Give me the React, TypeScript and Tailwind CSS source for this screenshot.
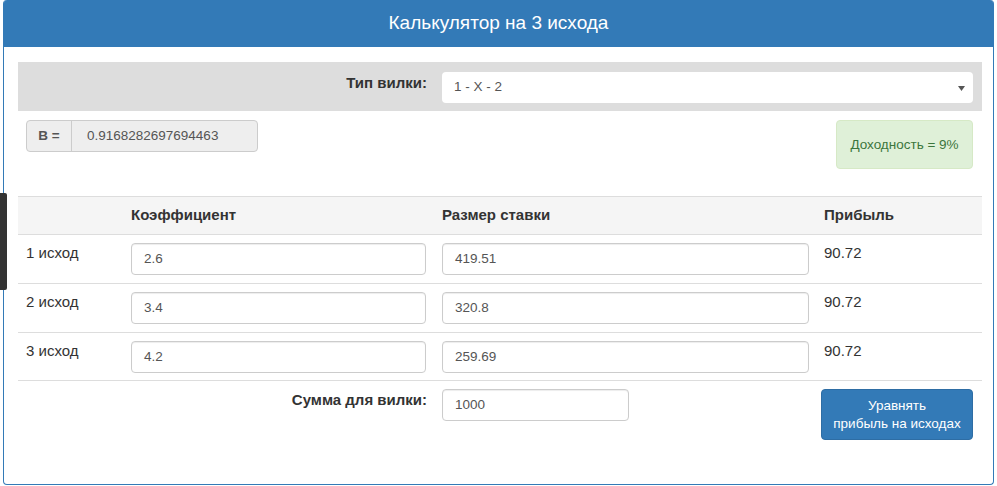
import React from "react";

const font = { fontFamily: '"Liberation Sans", Arial, Helvetica, sans-serif' };

function Field({ value, w }: { value: string; w: string }) {
  return (
    <div
      className={`${w} h-[32px] border border-[#ccc] rounded-[4px] bg-white flex items-center pl-[12px] text-[13.5px] text-[#555] shadow-[inset_0_1px_1px_rgba(0,0,0,0.075)]`}
    >
      {value}
    </div>
  );
}

function Row({ label, k, s, p, last }: { label: string; k: string; s: string; p: string; last?: boolean }) {
  return (
    <div className={`flex h-[49px] border-t border-[#ddd] ${last ? "border-b" : ""}`}>
      <div className="w-[105px] pl-[8px] pt-[8px] leading-[20px] text-[15px] text-[#333]">{label}</div>
      <div className="w-[311px] px-[8px] pt-[8px]">
        <Field value={k} w="w-[295px]" />
      </div>
      <div className="w-[383px] px-[8px] pt-[8px]">
        <Field value={s} w="w-[367px]" />
      </div>
      <div className="flex-1 pl-[7px] pt-[8px] leading-[20px] text-[15px] text-[#333]">{p}</div>
    </div>
  );
}

export default function App() {
  return (
    <div className="relative w-[997px] h-[486px] bg-white" style={font}>
      <div className="absolute left-0 top-[193px] w-[7px] h-[97px] bg-[#333] rounded-r-[2px] z-10" />
      <div className="ml-[3px] w-[991px] h-[485px] border border-t-0 border-[#337ab7] rounded-[4px] flex flex-col">
        <div className="h-[47px] bg-[#337ab7] rounded-t-[3px] flex items-center justify-center text-white text-[19px]">
          Калькулятор на 3 исхода
        </div>
        <div className="pl-[14px] pt-[15px] flex flex-col">
          {/* type row */}
          <div className="w-[964px] h-[49px] bg-[#ddd] flex pt-[10px]">
            <div className="w-[409px] text-right pt-[1px] text-[15px] font-bold text-[#333] leading-[20px]">
              Тип вилки:
            </div>
            <div className="ml-[15px] w-[531px] h-[31px] bg-white rounded-[4px] flex items-center justify-between pl-[12px] pr-[8px] text-[13.5px] text-[#555] shadow-[0_0_0_1px_#ddd]">
              <span>1 - X - 2</span>
              <svg width="7" height="5" viewBox="0 0 7 5" className="mt-[1px]">
                <path d="M0 0 L7 0 L3.5 5 Z" fill="#555" />
              </svg>
            </div>
          </div>
          {/* B + alert */}
          <div className="flex justify-between w-[955px] mt-[9px] pl-[8px]">
            <div className="flex h-[32px] w-[232px] border border-[#ccc] rounded-[4px] bg-[#eee] text-[13.5px]">
              <div className="w-[45px] border-r border-[#ccc] flex items-center justify-center font-bold text-[#555]">
                B =
              </div>
              <div className="flex-1 flex items-center pl-[15px] text-[#555]">0.9168282697694463</div>
            </div>
            <div className="w-[137px] h-[49px] bg-[#dff0d8] border border-[#d6e9c6] rounded-[4px] flex items-center justify-center text-[13.5px] text-[#3c763d] pt-[2px]">
              Доходность = 9%
            </div>
          </div>
          {/* table */}
          <div className="w-[964px] mt-[27px] flex flex-col">
            <div className="flex h-[38px] bg-[#f5f5f5] border-t border-[#ddd] items-center text-[15px] font-bold text-[#333]">
              <div className="w-[105px]" />
              <div className="w-[311px] pl-[8px]">Коэффициент</div>
              <div className="w-[383px] pl-[8px]">Размер ставки</div>
              <div className="flex-1 pl-[7px]">Прибыль</div>
            </div>
            <Row label="1 исход" k="2.6" s="419.51" p="90.72" />
            <Row label="2 исход" k="3.4" s="320.8" p="90.72" />
            <Row label="3 исход" k="4.2" s="259.69" p="90.72" last />
          </div>
          {/* sum row */}
          <div className="flex w-[964px] mt-[8px]">
            <div className="w-[409px] text-right pt-[1px] text-[15px] font-bold text-[#333] leading-[20px]">
              Сумма для вилки:
            </div>
            <div className="ml-[15px]">
              <Field value="1000" w="w-[187px]" />
            </div>
            <div className="ml-[192px] w-[152px] h-[51px] bg-[#337ab7] border border-[#2e6da4] rounded-[4px] flex flex-col items-center justify-center text-white text-[13.5px] leading-[18px]">
              <span>Уравнять</span>
              <span>прибыль на исходах</span>
            </div>
          </div>
        </div>
      </div>
    </div>
  );
}
